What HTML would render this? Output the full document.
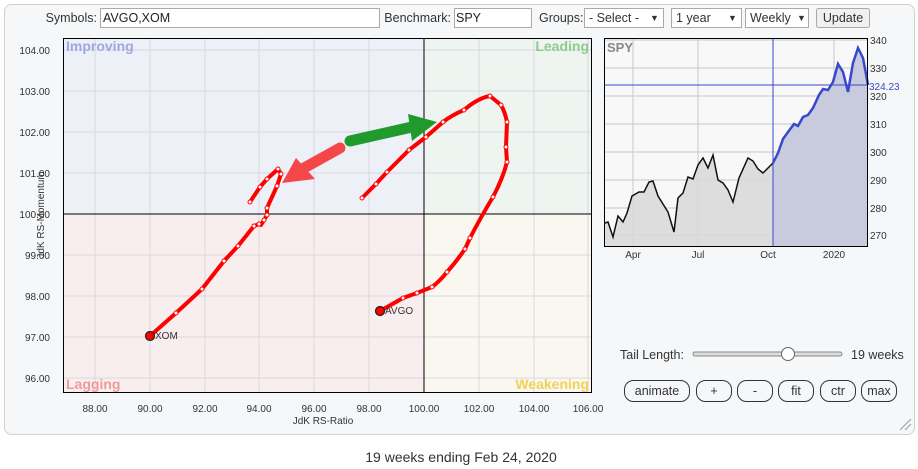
<!DOCTYPE html>
<html><head><meta charset="utf-8"><style>
html,body{margin:0;padding:0;background:#fff;width:918px;height:469px;overflow:hidden;font-family:"Liberation Sans",Arial,sans-serif;}
</style></head><body>
<svg width="918" height="469" xmlns="http://www.w3.org/2000/svg" font-family="Liberation Sans, Arial, sans-serif">
<rect x="4.5" y="4.5" width="910" height="430" rx="7" fill="#f6f7f9" stroke="#d0d0d0"/>
<!-- toolbar -->
<g font-size="12.5" fill="#333">
<text x="97" y="22" text-anchor="end">Symbols:</text>
<rect x="100.5" y="8.5" width="279" height="19" fill="#fff" stroke="#aaa"/>
<text x="103" y="22" fill="#222">AVGO,XOM</text>
<text x="451" y="22" text-anchor="end">Benchmark:</text>
<rect x="454.5" y="8.5" width="77" height="19" fill="#fff" stroke="#aaa"/>
<text x="456" y="22" fill="#222">SPY</text>
<text x="539" y="22">Groups:</text>
<rect x="584.5" y="8.5" width="79" height="19" fill="#fff" stroke="#aaa"/>
<text x="589" y="22">- Select -</text><text x="650" y="21" font-size="9">▼</text>
<rect x="671.5" y="8.5" width="70" height="19" fill="#fff" stroke="#aaa"/>
<text x="676" y="22">1 year</text><text x="728" y="21" font-size="9">▼</text>
<rect x="745.5" y="8.5" width="63" height="19" fill="#fff" stroke="#aaa"/>
<text x="750" y="22">Weekly</text><text x="797" y="21" font-size="9">▼</text>
<rect x="816.5" y="8.5" width="53" height="19" rx="2" fill="#f0f0f0" stroke="#aaa"/>
<text x="843" y="22" text-anchor="middle">Update</text>
</g>
<!-- RRG quadrants -->
<rect x="63" y="38" width="361" height="176" fill="#eef0f8"/>
<rect x="424" y="38" width="168" height="176" fill="#eef4ef"/>
<rect x="63" y="214" width="361" height="179" fill="#f9eeee"/>
<rect x="424" y="214" width="168" height="179" fill="#f9f7f0"/>
<g stroke="#d8d8de" stroke-width="1">
<line x1="95" y1="38" x2="95" y2="393"/><line x1="150" y1="38" x2="150" y2="393"/><line x1="205" y1="38" x2="205" y2="393"/><line x1="259" y1="38" x2="259" y2="393"/><line x1="314" y1="38" x2="314" y2="393"/><line x1="369" y1="38" x2="369" y2="393"/><line x1="479" y1="38" x2="479" y2="393"/><line x1="534" y1="38" x2="534" y2="393"/><line x1="588" y1="38" x2="588" y2="393"/>
<line x1="63" y1="50" x2="592" y2="50"/><line x1="63" y1="91" x2="592" y2="91"/><line x1="63" y1="132" x2="592" y2="132"/><line x1="63" y1="173" x2="592" y2="173"/><line x1="63" y1="255" x2="592" y2="255"/><line x1="63" y1="296" x2="592" y2="296"/><line x1="63" y1="337" x2="592" y2="337"/><line x1="63" y1="378" x2="592" y2="378"/>
</g>
<line x1="424" y1="38" x2="424" y2="393" stroke="#000"/>
<line x1="63" y1="214" x2="592" y2="214" stroke="#000"/>
<rect x="63.5" y="38.5" width="528" height="354" fill="none" stroke="#000"/>
<g font-size="14" font-weight="bold">
<text x="66" y="51" fill="#9ea6e2">Improving</text>
<text x="589" y="51" fill="#8fca8f" text-anchor="end">Leading</text>
<text x="66" y="389" fill="#f09a9a">Lagging</text>
<text x="589" y="389" fill="#f2d256" text-anchor="end">Weakening</text>
</g>
<g font-size="10" fill="#333" text-anchor="end">
<text x="50" y="54">104.00</text><text x="50" y="95">103.00</text><text x="50" y="136">102.00</text><text x="50" y="177">101.00</text><text x="50" y="218">100.00</text><text x="50" y="259">99.00</text><text x="50" y="300">98.00</text><text x="50" y="341">97.00</text><text x="50" y="382">96.00</text>
</g>
<g font-size="10" fill="#333" text-anchor="middle">
<text x="95" y="412">88.00</text><text x="150" y="412">90.00</text><text x="205" y="412">92.00</text><text x="259" y="412">94.00</text><text x="314" y="412">96.00</text><text x="369" y="412">98.00</text><text x="424" y="412">100.00</text><text x="479" y="412">102.00</text><text x="534" y="412">104.00</text><text x="588" y="412">106.00</text>
<text x="323" y="424">JdK RS-Ratio</text>
<text transform="translate(44,215) rotate(-90)">JdK RS-Momentum</text>
</g>
<!-- tails -->
<g fill="none" stroke="#f00" stroke-width="4" stroke-linejoin="round" stroke-linecap="round">
<polyline points="150,336 176,313 202,289 224,261 238,246 254,226 259,224 261,225 264,220 267,215 267,208 277,186 281,174 278,169 267,179 260,187 250,202"/>
<path d="M380,311 L403,298 L417,293 L432,287 Q440,281 447,272 Q456,262 465,249 L470,238 Q482,215 493,197 Q503,178 507,162 L506,147 L507,122 Q505,112 501,105 L490,96 Q478,98 464,110 Q452,115 443,122 L426,137 L409,150 L387,172 L376,184 L362,198"/>
</g>
<g fill="#fff" stroke="#f00" stroke-width="1">
<circle cx="176" cy="313" r="2"/><circle cx="202" cy="289" r="2"/><circle cx="224" cy="261" r="2"/><circle cx="238" cy="246" r="2"/><circle cx="254" cy="226" r="2"/><circle cx="259" cy="224" r="2"/><circle cx="264" cy="220" r="2"/><circle cx="267" cy="215" r="2"/><circle cx="267" cy="208" r="2"/><circle cx="277" cy="186" r="2"/><circle cx="281" cy="174" r="2"/><circle cx="278" cy="169" r="2"/><circle cx="267" cy="179" r="2"/><circle cx="260" cy="187" r="2"/><circle cx="250" cy="202" r="2"/>
<circle cx="403" cy="298" r="2"/><circle cx="417" cy="293" r="2"/><circle cx="432" cy="287" r="2"/><circle cx="447" cy="272" r="2"/><circle cx="465" cy="249" r="2"/><circle cx="470" cy="238" r="2"/><circle cx="493" cy="197" r="2"/><circle cx="507" cy="162" r="2"/><circle cx="506" cy="147" r="2"/><circle cx="507" cy="122" r="2"/><circle cx="501" cy="105" r="2"/><circle cx="490" cy="96" r="2"/><circle cx="464" cy="110" r="2"/><circle cx="443" cy="122" r="2"/><circle cx="426" cy="137" r="2"/><circle cx="409" cy="150" r="2"/><circle cx="387" cy="172" r="2"/><circle cx="376" cy="184" r="2"/><circle cx="362" cy="198" r="2"/>
</g>
<circle cx="150" cy="336" r="4.5" fill="#f00" stroke="#222" stroke-width="1.2"/>
<circle cx="380" cy="311" r="4.5" fill="#f00" stroke="#222" stroke-width="1.2"/>
<text x="155" y="339" font-size="10" fill="#333">XOM</text>
<text x="385" y="314" font-size="10" fill="#333">AVGO</text>
<!-- arrows -->
<line x1="350" y1="141" x2="412" y2="127" stroke="#219a2c" stroke-width="11" stroke-linecap="round"/>
<polygon points="408,114 437,122 412,141" fill="#219a2c"/>
<line x1="340" y1="148" x2="304" y2="168" stroke="#f44848" stroke-width="11" stroke-linecap="round"/>
<polygon points="296,158 282,183 315,179" fill="#f44848"/>
<!-- SPY chart -->
<rect x="604" y="38" width="264" height="209" fill="#f8f8f8"/>
<g stroke="#c8c8c8">
<line x1="633" y1="38" x2="633" y2="247"/><line x1="698" y1="38" x2="698" y2="247"/><line x1="834" y1="38" x2="834" y2="247"/>
<line x1="604" y1="40" x2="868" y2="40"/><line x1="604" y1="68" x2="868" y2="68"/><line x1="604" y1="96" x2="868" y2="96"/><line x1="604" y1="124" x2="868" y2="124"/><line x1="604" y1="152" x2="868" y2="152"/><line x1="604" y1="180" x2="868" y2="180"/><line x1="604" y1="208" x2="868" y2="208"/><line x1="604" y1="235" x2="868" y2="235"/>
</g>
<polygon fill="#d8d8d8" fill-opacity="0.85" points="604,247 605,223 608,222 613,237 618,216 623,222 627,213 632,196 639,192 644,192 649,182 653,181 658,196 668,212 674,232 678,198 683,193 688,177 693,179 698,165 703,158 708,168 713,155 718,180 723,183 728,190 733,202 739,178 748,158 753,161 758,169 763,173 768,168 773,163 773,247"/>
<polygon fill="#c8cade" points="773,247 773,163 778,153 783,139 788,132 794,124 798,126 803,117 808,115 813,108 819,95 823,89 828,90 833,82 838,64 843,72 848,92 853,63 858,48 863,58 868,85 868,247"/>
<polyline fill="none" stroke="#111" stroke-width="1.5" points="605,223 608,222 613,237 618,216 623,222 627,213 632,196 639,192 644,192 649,182 653,181 658,196 668,212 674,232 678,198 683,193 688,177 693,179 698,165 703,158 708,168 713,155 718,180 723,183 728,190 733,202 739,178 748,158 753,161 758,169 763,173 768,168 773,163"/>
<polyline fill="none" stroke="#3a48cc" stroke-width="2.5" points="773,163 778,153 783,139 788,132 794,124 798,126 803,117 808,115 813,108 819,95 823,89 828,90 833,82 838,64 843,72 848,92 853,63 858,48 863,58 868,85"/>
<line x1="773" y1="38" x2="773" y2="247" stroke="#3a48cc"/>
<line x1="604" y1="85" x2="868" y2="85" stroke="#3a48cc"/>
<rect x="604.5" y="38.5" width="263" height="208" fill="none" stroke="#000"/>
<text x="607" y="52" font-size="13" font-weight="bold" fill="#888">SPY</text>
<g font-size="10" fill="#333">
<text x="870" y="44">340</text><text x="870" y="72">330</text><text x="870" y="100">320</text><text x="870" y="128">310</text><text x="870" y="156">300</text><text x="870" y="184">290</text><text x="870" y="212">280</text><text x="870" y="239">270</text>
<text x="869" y="90" fill="#3a48cc">324.23</text>
</g>
<g font-size="10" fill="#333" text-anchor="middle">
<text x="633" y="258">Apr</text><text x="698" y="258">Jul</text><text x="768" y="258">Oct</text><text x="834" y="258">2020</text>
</g>
<!-- controls -->
<text x="620" y="359" font-size="12.5" fill="#333">Tail Length:</text>
<rect x="693" y="352" width="149" height="4" rx="2" fill="#ddd" stroke="#888"/>
<circle cx="788" cy="354" r="6.5" fill="#fff" stroke="#666"/>
<text x="851" y="359" font-size="12.5" fill="#333">19 weeks</text>
<g fill="#f6f7f9" stroke="#333" stroke-width="1">
<rect x="624.5" y="380.5" width="65" height="21" rx="9"/>
<rect x="696.5" y="380.5" width="35" height="21" rx="9"/>
<rect x="737.5" y="380.5" width="35" height="21" rx="9"/>
<rect x="778.5" y="380.5" width="35" height="21" rx="9"/>
<rect x="820.5" y="380.5" width="35" height="21" rx="9"/>
<rect x="861.5" y="380.5" width="35" height="21" rx="9"/>
</g>
<g font-size="12.5" fill="#333" text-anchor="middle">
<text x="657" y="395">animate</text><text x="714" y="395">+</text><text x="755" y="395">-</text><text x="796" y="395">fit</text><text x="838" y="395">ctr</text><text x="879" y="395">max</text>
</g>
<g stroke="#999"><line x1="900" y1="430" x2="911" y2="419"/><line x1="905" y1="430" x2="911" y2="424"/></g>
<text x="461" y="462" font-size="14" fill="#333" text-anchor="middle">19 weeks ending Feb 24, 2020</text>
</svg>
</body></html>
